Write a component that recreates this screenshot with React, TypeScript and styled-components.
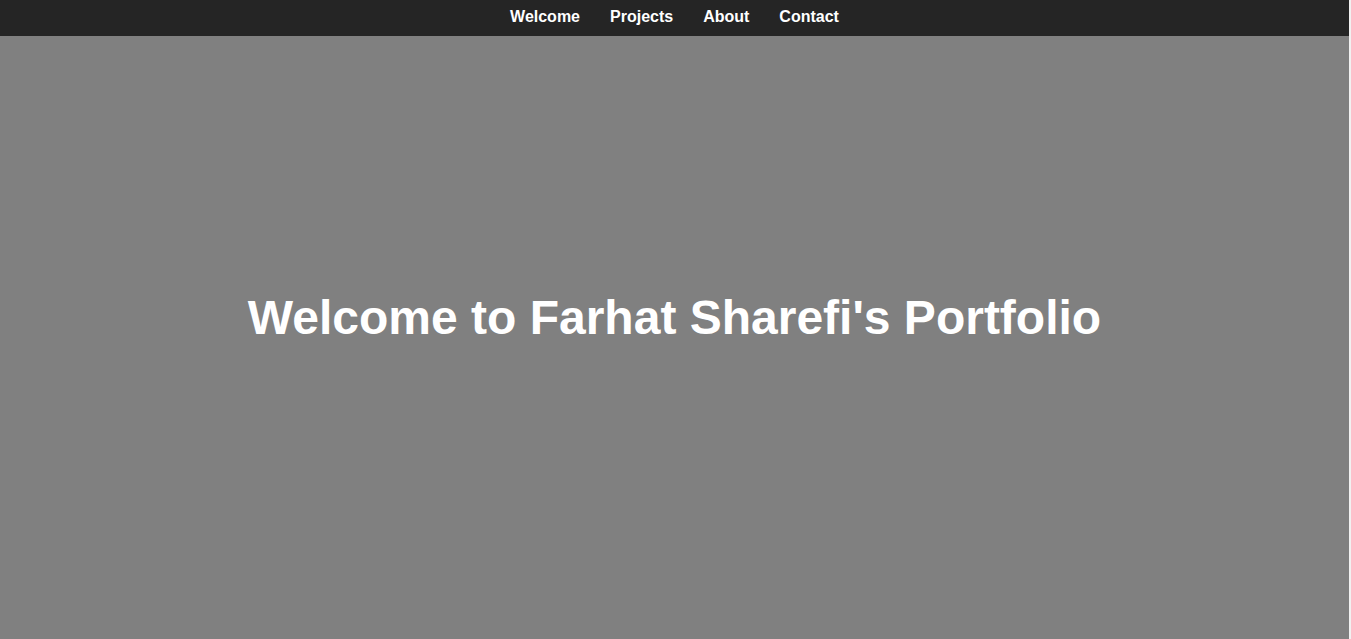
import styled, {createGlobalStyle} from 'styled-components';

const GlobalStyle = createGlobalStyle`
  html, body {
    margin: 0;
    padding: 0;
    background: #f1f1f1;
    font-family: "Liberation Sans", Arial, sans-serif;
  }
`;

const Page = styled.div`
  width: calc(100vw - 2px);
`;

const NavBar = styled.nav`
  position: fixed;
  top: 0;
  left: 0;
  width: calc(100vw - 2px);
  height: 36px;
  box-sizing: border-box;
  padding-bottom: 2px;
  background: #252525;
  display: flex;
  justify-content: center;
  align-items: center;
  z-index: 10;
`;

const NavLink = styled.a`
  color: #ffffff;
  font-size: 16px;
  font-weight: 700;
  text-decoration: none;
  padding: 0 15px;
  cursor: pointer;
`;

const Hero = styled.section`
  height: 100vh;
  box-sizing: border-box;
  padding-bottom: 4px;
  background: #808080;
  display: flex;
  align-items: center;
  justify-content: center;
`;

const Title = styled.h1`
  margin: 0;
  color: #ffffff;
  font-size: 48px;
  font-weight: 700;
`;

const links = ['Welcome', 'Projects', 'About', 'Contact'];

export default function App() {
  return (
    <Page>
      <GlobalStyle />
      <NavBar>
        {links.map(link => (
          <NavLink key={link} href={`#${link.toLowerCase()}`}>
            {link}
          </NavLink>
        ))}
      </NavBar>
      <Hero id="welcome">
        <Title>Welcome to Farhat Sharefi's Portfolio</Title>
      </Hero>
    </Page>
  );
}
